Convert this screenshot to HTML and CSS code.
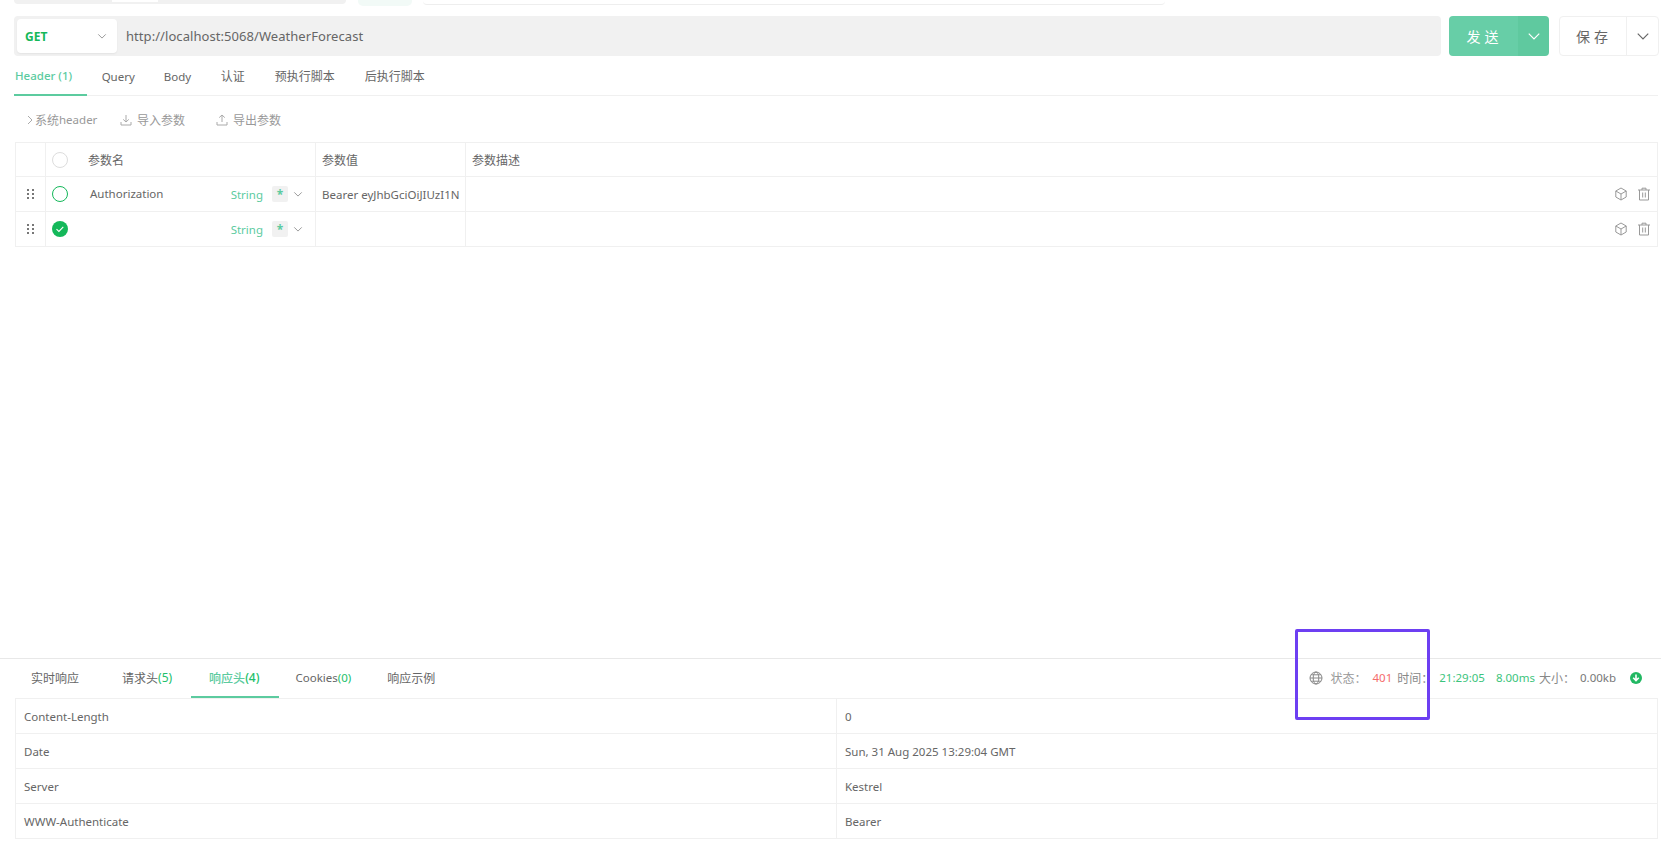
FILE: index.html
```html
<!DOCTYPE html>
<html lang="zh-CN">
<head>
    <meta charset="UTF-8">
    <title>接口调试</title>
    <link rel="stylesheet" href="styles.css">
</head>
<body>
    <svg class="defs" width="0" height="0">
        <symbol id="chev" viewBox="0 0 12 12"><path d="M1.5 4l4.5 4.5L10.5 4" fill="none" stroke="currentColor" stroke-width="1"/></symbol>
        <symbol id="grip" viewBox="0 0 10 12"><g fill="#777"><rect x="1" y="1" width="2" height="2"/><rect x="6" y="1" width="2" height="2"/><rect x="1" y="5" width="2" height="2"/><rect x="6" y="5" width="2" height="2"/><rect x="1" y="9" width="2" height="2"/><rect x="6" y="9" width="2" height="2"/></g></symbol>
        <symbol id="cube" viewBox="0 0 14 14"><path d="M7 1l5.2 3v6L7 13l-5.2-3V4zM1.8 4L7 7l5.2-3M7 7v6" fill="none" stroke="#999" stroke-width="1"/></symbol>
        <symbol id="trash" viewBox="0 0 14 14"><path d="M1 3h12M5 3V1.2h4V3M2.5 3v10h9V3M5.7 5.5v5M8.3 5.5v5" fill="none" stroke="#999" stroke-width="1"/></symbol>
    </svg>

    <div class="top-strip">
        <div class="top-tabs"><span class="top-tab"></span></div>
        <div class="top-pill"></div>
        <div class="top-line"></div>
    </div>

    <div class="request-bar">
        <div class="url-box">
            <div class="method">
                <span>GET</span>
                <svg class="chev-small"><use href="#chev"/></svg>
            </div>
            <span class="url">http://localhost:5068/WeatherForecast</span>
        </div>
        <div class="send-btn">
            <span class="send-main">发送</span>
            <span class="send-more"><svg class="chev-big"><use href="#chev"/></svg></span>
        </div>
        <div class="save-btn">
            <span class="save-main">保存</span>
            <span class="save-more"><svg class="chev-big"><use href="#chev"/></svg></span>
        </div>
    </div>

    <div class="tabs">
        <span class="tab active en">Header (1)</span>
        <span class="tab en">Query</span>
        <span class="tab en">Body</span>
        <span class="tab">认证</span>
        <span class="tab">预执行脚本</span>
        <span class="tab">后执行脚本</span>
    </div>

    <div class="toolbar">
        <span class="tool-system"><svg class="tool-arrow" viewBox="0 0 6 10"><path d="M1 1l4 4-4 4" fill="none" stroke="#aaa"/></svg>系统<span class="en">header</span></span>
        <span class="tool-item">
            <svg class="tool-icon" viewBox="0 0 12 12"><path d="M6 1v7M3.2 5.4L6 8l2.8-2.6M1 8v3h10V8" fill="none" stroke="#aaa"/></svg>导入参数
        </span>
        <span class="tool-item">
            <svg class="tool-icon" viewBox="0 0 12 12"><path d="M6 8V1M3.2 3.6L6 1l2.8 2.6M1 8v3h10V8" fill="none" stroke="#aaa"/></svg>导出参数
        </span>
    </div>

    <div class="params">
        <div class="row row-head">
            <div class="cell cell-grip"></div>
            <div class="cell cell-name">
                <span class="circle circle-off"></span>
                <span class="head-name">参数名</span>
            </div>
            <div class="cell cell-value">参数值</div>
            <div class="cell cell-desc">参数描述</div>
        </div>
        <div class="row">
            <div class="cell cell-grip"><svg class="grip"><use href="#grip"/></svg></div>
            <div class="cell cell-name">
                <span class="circle circle-open"></span>
                <span class="param-name en">Authorization</span>
                <span class="type en">String</span>
                <span class="star">*</span>
                <svg class="chev-small"><use href="#chev"/></svg>
            </div>
            <div class="cell cell-value en">Bearer eyJhbGciOiJIUzI1N</div>
            <div class="cell cell-desc cell-actions">
                <svg class="act"><use href="#cube"/></svg>
                <svg class="act"><use href="#trash"/></svg>
            </div>
        </div>
        <div class="row">
            <div class="cell cell-grip"><svg class="grip"><use href="#grip"/></svg></div>
            <div class="cell cell-name">
                <span class="circle circle-on">
                    <svg viewBox="0 0 16 16"><path d="M4.5 8.2l2.4 2.3 4.4-4.6" fill="none" stroke="#fff" stroke-width="1.1"/></svg>
                </span>
                <span class="param-name"></span>
                <span class="type en">String</span>
                <span class="star">*</span>
                <svg class="chev-small"><use href="#chev"/></svg>
            </div>
            <div class="cell cell-value"></div>
            <div class="cell cell-desc cell-actions">
                <svg class="act"><use href="#cube"/></svg>
                <svg class="act"><use href="#trash"/></svg>
            </div>
        </div>
    </div>

    <div class="response">
        <div class="res-head">
            <div class="res-tabs">
                <span class="res-tab res-tab-1">实时响应</span>
                <span class="res-tab">请求头<em>(5)</em></span>
                <span class="res-tab active">响应头<em>(4)</em></span>
                <span class="res-tab res-tab-cookies en">Cookies<em>(0)</em></span>
                <span class="res-tab">响应示例</span>
            </div>
            <div class="status">
                <svg class="globe" viewBox="0 0 14 14"><g fill="none" stroke="#888"><circle cx="7" cy="7" r="6"/><ellipse cx="7" cy="7" rx="2.8" ry="6"/><path d="M1 7h12M2 3.8h10M2 10.2h10"/></g></svg>
                <span class="st-label st-state">状态：</span>
                <span class="st-code en">401</span>
                <span class="st-label st-time">时间：</span>
                <span class="st-green st-clock en">21:29:05</span>
                <span class="st-green st-ms en">8.00ms</span>
                <span class="st-label st-size">大小：</span>
                <span class="st-kb en">0.00kb</span>
                <svg class="down" viewBox="0 0 12 12"><circle cx="6" cy="6" r="6" fill="#22b863"/><path d="M6 2.5v6M3.2 5.8L6 8.6l2.8-2.8" fill="none" stroke="#fff" stroke-width="1.6"/></svg>
            </div>
        </div>
        <div class="res-table">
            <div class="res-row"><div class="res-key">Content-Length</div><div class="res-val">0</div></div>
            <div class="res-row"><div class="res-key">Date</div><div class="res-val">Sun, 31 Aug 2025 13:29:04 GMT</div></div>
            <div class="res-row"><div class="res-key">Server</div><div class="res-val">Kestrel</div></div>
            <div class="res-row"><div class="res-key">WWW-Authenticate</div><div class="res-val">Bearer</div></div>
        </div>
    </div>

    <div class="highlight"></div>
</body>
</html>
```

FILE: styles.css
```css
* {
    box-sizing: border-box;
    margin: 0;
    padding: 0;
}

body {
    position: relative;
    display: flex;
    flex-direction: column;
    width: 1661px;
    height: 857px;
    overflow: hidden;
    background-color: #fff;
    font-family: "Noto Sans", "Noto Sans CJK SC", sans-serif;
    font-size: 12px;
    color: #666;
}

/* latin strings run a bit narrower than the cjk ones */
.en {
    font-size: 11.5px;
}

.defs {
    position: absolute;
}

/* clipped row at the top of the window */
.top-strip {
    display: flex;
    align-items: flex-start;
    height: 16px;
    padding-left: 14px;
}

.top-tabs {
    width: 332px;
    height: 4px;
    padding-left: 98px;
    background-color: #f1f1f1;
    border-radius: 0 0 4px 4px;
}

.top-tab {
    display: block;
    width: 46px;
    height: 2px;
    background-color: #fff;
}

.top-pill {
    width: 54px;
    height: 6px;
    margin-left: 12px;
    background-color: #f2faf7;
    border-radius: 0 0 5px 5px;
}

.top-line {
    width: 742px;
    height: 5px;
    margin-left: 11px;
    border-bottom: 1px solid #eee;
    border-radius: 0 0 4px 4px;
}

.request-bar {
    display: flex;
    height: 40px;
    padding-left: 14px;
}

.url-box {
    display: flex;
    align-items: center;
    width: 1427px;
    padding-left: 3px;
    background-color: #f1f1f1;
    border-radius: 4px;
}

.method {
    display: flex;
    align-items: center;
    justify-content: space-between;
    width: 100px;
    height: 34px;
    padding: 0 10px 0 8px;
    background-color: #fff;
    border-radius: 4px;
    box-shadow: 0 1px 2px rgba(0, 0, 0, 0.06);
    font-weight: 700;
    color: #14b85a;
}

.url {
    margin-left: 9px;
    font-size: 13px;
    letter-spacing: 0.06px;
    color: #666;
}

.chev-small {
    width: 10px;
    height: 10px;
    color: #888;
}

.chev-big {
    width: 14px;
    height: 14px;
}

.send-btn {
    display: flex;
    width: 100px;
    margin-left: 8px;
    border-radius: 4px;
    overflow: hidden;
    color: #fff;
    font-size: 14px;
}

.send-main {
    display: flex;
    align-items: center;
    justify-content: center;
    width: 69px;
    padding-left: 2px;
    background-color: #67cea7;
    letter-spacing: 4px;
}

.send-more {
    display: flex;
    align-items: center;
    justify-content: center;
    flex: 1;
    background-color: #5fc99f;
}

.save-btn {
    display: flex;
    width: 100px;
    margin-left: 10px;
    border: 1px solid #f0f0f0;
    border-radius: 4px;
    font-size: 14px;
    color: #666;
}

.save-main {
    display: flex;
    align-items: center;
    justify-content: center;
    width: 67px;
    padding-left: 2px;
    border-right: 1px solid #f0f0f0;
    letter-spacing: 4px;
}

.save-more {
    display: flex;
    align-items: center;
    justify-content: center;
    flex: 1;
}

.tabs {
    display: flex;
    height: 40px;
    margin: 0 3px 0 14px;
    border-bottom: 1px solid #f0f0f0;
}

.tab {
    display: flex;
    align-items: center;
    height: 40px;
    padding: 0 15px;
}

.tab.en {
    padding: 0 14.5px;
}

.tab.active {
    padding: 0 15px 0 1px;
    color: #5ccb9f;
    border-bottom: 2px solid #5ccb9f;
    font-weight: 500;
}

.toolbar {
    display: flex;
    align-items: center;
    height: 46px;
    padding: 1px 0 0 27px;
    color: #999;
}

.tool-system {
    display: flex;
    align-items: center;
    width: 93px;
}

.tool-arrow {
    width: 6px;
    height: 10px;
    margin-right: 2px;
}

.tool-item {
    display: flex;
    align-items: center;
    width: 96px;
}

.tool-icon {
    width: 12px;
    height: 12px;
    margin-right: 5px;
}

.params {
    margin: 0 3px 0 15px;
    border: 1px solid #f0f0f0;
    border-bottom: 0;
}

.row {
    display: flex;
    height: 35px;
    border-bottom: 1px solid #f0f0f0;
}

.row-head {
    height: 34px;
}

.cell {
    display: flex;
    align-items: center;
    border-right: 1px solid #f0f0f0;
}

.cell-grip {
    justify-content: center;
    width: 30px;
}

.grip {
    width: 10px;
    height: 12px;
}

.cell-name {
    width: 270px;
    padding: 0 12px 0 6px;
}

.circle {
    flex: none;
    width: 16px;
    height: 16px;
    border-radius: 50%;
}

.circle svg {
    display: block;
}

.circle-off {
    border: 1px solid #ddd;
}

.circle-open {
    border: 1px solid #14b85a;
}

.circle-on {
    background-color: #14b85a;
}

.head-name {
    margin-left: 20px;
}

.param-name {
    margin-left: 22px;
    padding-bottom: 2px;
    flex: 1;
}

.type {
    color: #5ccb9f;
}

.star {
    display: flex;
    align-items: center;
    justify-content: center;
    width: 16px;
    height: 16px;
    margin: 0 5px 0 9px;
    background-color: #f1f1f1;
    border-radius: 2px;
    font-weight: 700;
    color: #5ccb9f;
}

.cell-value {
    width: 150px;
    padding-left: 6px;
    white-space: nowrap;
}

.cell-desc {
    flex: 1;
    padding-left: 6px;
    border-right: 0;
}

.cell-actions {
    justify-content: flex-end;
    gap: 9px;
    padding-right: 6px;
}

.act {
    width: 14px;
    height: 14px;
}

.response {
    display: flex;
    flex-direction: column;
    margin-top: auto;
    padding-bottom: 18px;
    border-top: 1px solid #e8e8e8;
}

.res-head {
    display: flex;
    justify-content: space-between;
    height: 39px;
}

.res-tabs {
    display: flex;
    padding-left: 15px;
}

.res-tab {
    display: flex;
    align-items: center;
    height: 39px;
    padding: 0 18px 2px;
}

.res-tab-1 {
    padding: 0 25px 2px 16px;
}

.res-tab-cookies {
    padding-left: 16px;
}

.res-tab em {
    font-style: normal;
    color: #22c06b;
}

.res-tab.active {
    margin-left: 1px;
    padding-right: 20px;
    padding-bottom: 0;
    color: #5ccb9f;
    border-bottom: 2px solid #5ccb9f;
    font-weight: 500;
}

.status {
    display: flex;
    align-items: center;
    padding: 0 19px 2px 0;
}

.globe {
    width: 14px;
    height: 14px;
    margin-right: 7px;
}

.st-label {
    color: #999;
}

.st-code {
    margin-left: 6px;
    color: #f56c6c;
}

.st-time {
    margin-left: 5px;
    color: #888;
}

.st-green {
    color: #3cc47c;
}

.st-clock {
    margin-left: 6px;
}

.st-ms {
    margin-left: 11px;
}

.st-size {
    margin-left: 4px;
    color: #888;
}

.st-kb {
    margin-left: 5px;
    color: #777;
}

.down {
    width: 12px;
    height: 12px;
    margin-left: 14px;
}

.res-table {
    margin: 0 3px 0 15px;
    border: 1px solid #f0f0f0;
    border-bottom: 0;
    font-size: 11.5px;
}

.res-row {
    display: flex;
    height: 35px;
    border-bottom: 1px solid #f0f0f0;
}

.res-key,
.res-val {
    display: flex;
    align-items: center;
    flex: 1;
    padding-left: 8px;
}

.res-key {
    border-right: 1px solid #f0f0f0;
}

/* annotation drawn on top of the screenshot */
.highlight {
    position: absolute;
    left: 1295px;
    top: 629px;
    width: 135px;
    height: 91px;
    border: 3px solid #6d3ff2;
    border-radius: 2px;
}
```
